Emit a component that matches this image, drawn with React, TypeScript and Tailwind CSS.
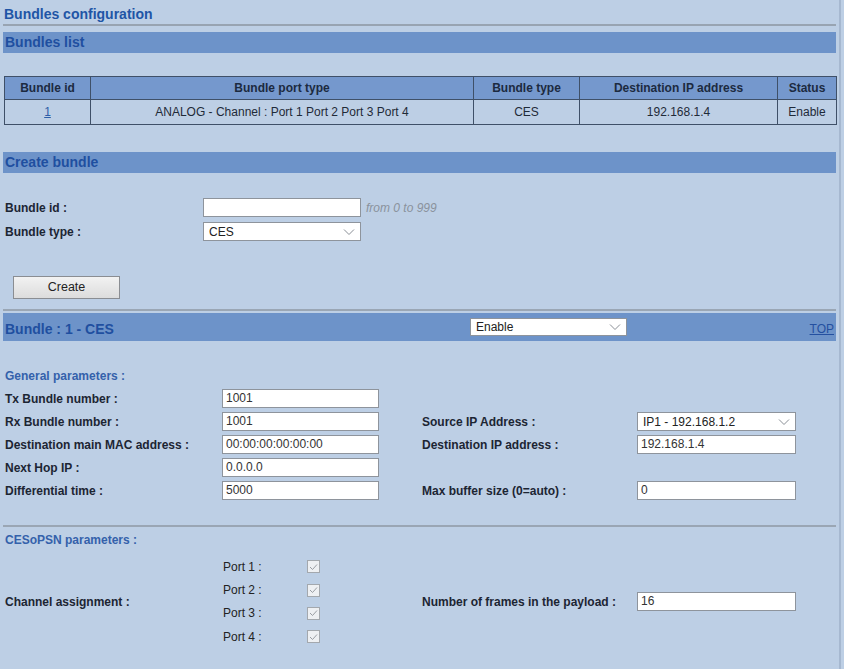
import React from "react";

const Chevron = () => (
  <svg width="12" height="8" viewBox="0 0 12 8" className="shrink-0">
    <polyline points="1,1.5 6,6.5 11,1.5" fill="none" stroke="#8a8f96" strokeWidth="1" />
  </svg>
);

const Input = ({ value = "", w = "w-[157px]" }: { value?: string; w?: string }) => (
  <div className={`${w} h-[19px] bg-white border border-[#8e949c] px-[3px] text-[12px] leading-[17px] text-[#333]`}>
    {value}
  </div>
);

const Select = ({ value, w = "w-[158px]", h = "h-[19px]" }: { value: string; w?: string; h?: string }) => (
  <div className={`${w} ${h} bg-white border border-[#8e949c] pl-[5px] pr-[5px] flex items-center justify-between text-[12px] text-[#222]`}>
    <span>{value}</span>
    <Chevron />
  </div>
);

const Check = () => (
  <div className="w-[13px] h-[13px] border border-[#a3a8ae] bg-[#eef0f3] flex items-center justify-center">
    <svg width="9" height="8" viewBox="0 0 9 8">
      <polyline points="1,4 3.5,6.5 8,1.5" fill="none" stroke="#9a9ea4" strokeWidth="1" />
    </svg>
  </div>
);

const Bar = ({ children, h = "h-[21px]" }: { children: React.ReactNode; h?: string }) => (
  <div className={`${h} bg-[#6d93c9] text-[14px] font-bold text-[#1f4fa0] pl-[2px] flex items-center`}>{children}</div>
);

const Row = ({
  l,
  lc,
  r,
  rc,
}: {
  l?: string;
  lc?: React.ReactNode;
  r?: string;
  rc?: React.ReactNode;
}) => (
  <div className="flex items-center h-[23px] pl-[2px]">
    <div className="w-[217px] font-bold">{l}</div>
    <div className="w-[157px]">{lc}</div>
    <div className="ml-[43px] w-[215px] font-bold">{r}</div>
    <div className="w-[159px]">{rc}</div>
  </div>
);

export default function App() {
  const th = "border border-[#3f5068] bg-[#7598cd] font-bold text-[#1c2a40] h-[23px]";
  const td = "border border-[#3f5068] h-[25px] text-[#1f2a38]";
  return (
    <div className="w-[844px] h-[669px] overflow-hidden bg-[#bdcfe5] text-[12px] text-[#1c2533] font-['Liberation_Sans',Arial,sans-serif] flex">
      <div className="w-[839px] pl-[3px] pr-[3px] flex flex-col">
        <div className="h-[24px] pt-[6px] pl-[1px] text-[14px] font-bold text-[#1f55a6] leading-[17px]">
          Bundles configuration
        </div>
        <div className="h-[2px] bg-[#98a4b2]" />
        <div className="mt-[6px]">
          <Bar>Bundles list</Bar>
        </div>
        <table className="mt-[23px] ml-[1px] w-[833px] border-collapse text-center text-[12px]">
          <thead>
            <tr>
              <th className={`${th} w-[86px]`}>Bundle id</th>
              <th className={`${th} w-[383px]`}>Bundle port type</th>
              <th className={`${th} w-[106px]`}>Bundle type</th>
              <th className={`${th} w-[198px]`}>Destination IP address</th>
              <th className={th}>Status</th>
            </tr>
          </thead>
          <tbody>
            <tr>
              <td className={td}>
                <span className="underline text-[#2d5ea8]">1</span>
              </td>
              <td className={td}>ANALOG - Channel : Port 1 Port 2 Port 3 Port 4</td>
              <td className={td}>CES</td>
              <td className={td}>192.168.1.4</td>
              <td className={td}>Enable</td>
            </tr>
          </tbody>
        </table>
        <div className="mt-[27px]">
          <Bar>Create bundle</Bar>
        </div>
        <div className="mt-[25px] flex flex-col gap-[5px] pl-[2px]">
          <div className="flex items-center h-[19px]">
            <div className="w-[198px] font-bold">Bundle id :</div>
            <Input w="w-[158px]" />
            <span className="ml-[5px] italic text-[#8a929c]">from 0 to 999</span>
          </div>
          <div className="flex items-center h-[19px]">
            <div className="w-[198px] font-bold">Bundle type :</div>
            <Select value="CES" />
          </div>
        </div>
        <div className="mt-[35px] ml-[10px]">
          <div className="w-[107px] h-[23px] border border-[#8a8d92] bg-gradient-to-b from-[#f2f2f2] to-[#dcdcdc] flex items-center justify-center text-[12.5px] text-[#222]">
            Create
          </div>
        </div>
        <div className="mt-[10px] h-[2px] bg-[#9aa6b4]" />
        <div className="mt-[2px] h-[28px] bg-[#6d93c9] flex items-center pl-[2px] pr-[2px]">
          <div className="w-[465px] text-[14px] font-bold text-[#1f4fa0] pt-[4px]">Bundle : 1 - CES</div>
          <Select value="Enable" w="w-[157px]" h="h-[18px]" />
          <div className="flex-1" />
          <span className="text-[12px] underline text-[#2450a0] pt-[3px]">TOP</span>
        </div>
        <div className="mt-[27px] pl-[2px] font-bold text-[#3461ab] h-[16px] leading-[16px]">General parameters :</div>
        <div className="mt-[3px] flex flex-col">
          <Row l="Tx Bundle number :" lc={<Input value="1001" />} />
          <Row
            l="Rx Bundle number :"
            lc={<Input value="1001" />}
            r="Source IP Address :"
            rc={<Select value="IP1 - 192.168.1.2" w="w-[159px]" />}
          />
          <Row
            l="Destination main MAC address :"
            lc={<Input value="00:00:00:00:00:00" />}
            r="Destination IP address :"
            rc={<Input value="192.168.1.4" w="w-[159px]" />}
          />
          <Row l="Next Hop IP :" lc={<Input value="0.0.0.0" />} />
          <Row
            l="Differential time :"
            lc={<Input value="5000" />}
            r="Max buffer size (0=auto) :"
            rc={<Input value="0" w="w-[159px]" />}
          />
        </div>
        <div className="mt-[23px] h-[2px] bg-[#9aa6b4]" />
        <div className="mt-[5px] pl-[2px] font-bold text-[#3461ab] h-[16px] leading-[16px]">CESoPSN parameters :</div>
        <div className="mt-[7px] flex items-center pl-[2px]">
          <div className="w-[218px] font-bold">Channel assignment :</div>
          <div className="w-[156px] flex flex-col">
            {["Port 1 :", "Port 2 :", "Port 3 :", "Port 4 :"].map((p) => (
              <div key={p} className="flex items-center h-[23.4px]">
                <span className="w-[84px] text-[#222]">{p}</span>
                <Check />
              </div>
            ))}
          </div>
          <div className="ml-[43px] w-[215px] font-bold">Number of frames in the payload :</div>
          <Input value="16" w="w-[159px]" />
        </div>
      </div>
      <div className="w-[2px] bg-[#a6b8d0]" />
    </div>
  );
}
